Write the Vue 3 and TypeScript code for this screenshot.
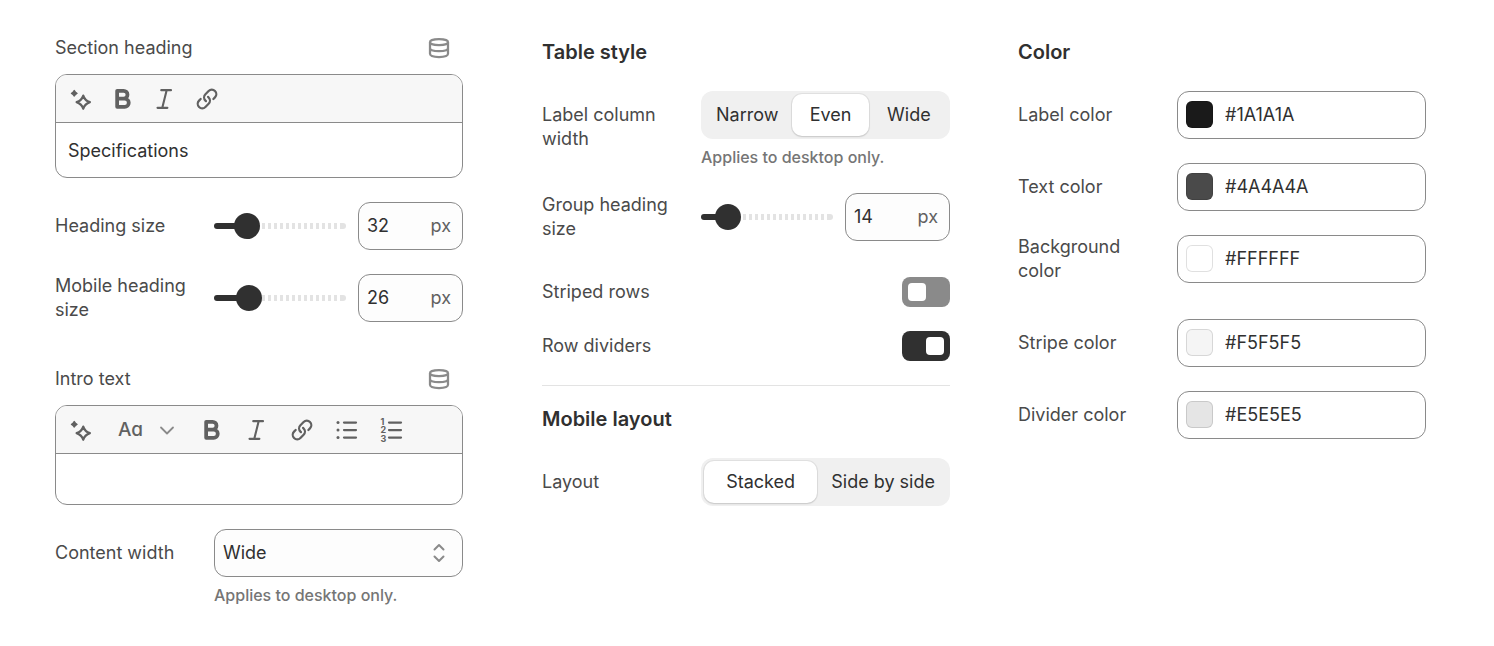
<script setup lang="ts">
import { reactive, ref } from 'vue'

interface SizeSetting {
  id: string
  label: string
  value: number
  min: number
  max: number
  wraps: boolean
}

interface ColorSetting {
  id: string
  label: string
  value: string
  wraps: boolean
}

const heading = ref('Specifications')
const intro = ref('')
const contentWidth = ref('Wide')

const headingSizes = reactive<SizeSetting[]>([
  { id: 'heading-size', label: 'Heading size', value: 32, min: 16, max: 100, wraps: false },
  { id: 'mobile-heading-size', label: 'Mobile heading size', value: 26, min: 12, max: 80, wraps: true },
])

const groupSizes = reactive<SizeSetting[]>([
  { id: 'group-heading-size', label: 'Group heading size', value: 14, min: 10, max: 40, wraps: true },
])

const columnWidths = ['Narrow', 'Even', 'Wide']
const columnWidth = ref('Even')
const layouts = ['Stacked', 'Side by side']
const layout = ref('Stacked')

const toggles = reactive([
  { id: 'striped-rows', label: 'Striped rows', on: false },
  { id: 'row-dividers', label: 'Row dividers', on: true },
])

const colors = reactive<ColorSetting[]>([
  { id: 'label-color', label: 'Label color', value: '#1A1A1A', wraps: false },
  { id: 'text-color', label: 'Text color', value: '#4A4A4A', wraps: false },
  { id: 'background-color', label: 'Background color', value: '#FFFFFF', wraps: true },
  { id: 'stripe-color', label: 'Stripe color', value: '#F5F5F5', wraps: false },
  { id: 'divider-color', label: 'Divider color', value: '#E5E5E5', wraps: false },
])

function fill(s: SizeSetting): string {
  return `${((s.value - s.min) / (s.max - s.min)) * 100}%`
}
</script>

<template>
  <svg class="symbols" aria-hidden="true">
    <symbol id="i-magic" viewBox="0 0 20 20">
      <path d="M11.5 7.7q1.1 3.3 4.4 4.4q-3.3 1.1-4.4 4.4q-1.1-3.3-4.4-4.4q3.3-1.1 4.4-4.4z" fill="none" stroke="currentColor" stroke-width="1.5" stroke-linejoin="round" />
      <path d="M5.5 4.4q.6 1.2 1.8 1.8q-1.2.6-1.8 1.8q-.6-1.2-1.8-1.8q1.2-.6 1.8-1.8z" fill="currentColor" stroke="currentColor" stroke-width="1" stroke-linejoin="round" />
    </symbol>
    <symbol id="i-bold" viewBox="0 0 20 20">
      <path d="M6.1 4.5h4.3a2.6 2.6 0 0 1 0 5.2H6.1zM6.1 9.7h5a2.75 2.75 0 0 1 0 5.5h-5z" fill="none" stroke="currentColor" stroke-width="2.5" stroke-linejoin="round" />
    </symbol>
    <symbol id="i-italic" viewBox="0 0 20 20">
      <path d="M7.5 4.1h6.5M5 15.9h6.6M11.1 4.1L8.2 15.9" fill="none" stroke="currentColor" stroke-width="1.4" stroke-linecap="round" />
    </symbol>
    <symbol id="i-link" viewBox="0 0 20 20">
      <path d="M15.842 4.175a3.746 3.746 0 0 0-5.298 0l-2.116 2.117a3.75 3.75 0 0 0 .01 5.313l.338.336a.75.75 0 1 0 1.057-1.064l-.339-.337a2.25 2.25 0 0 1-.005-3.187l2.116-2.117a2.246 2.246 0 1 1 3.173 3.18l-1.052 1.047a.75.75 0 0 0 1.058 1.064l1.052-1.047a3.746 3.746 0 0 0 .006-5.305z" fill="currentColor" />
      <path d="M4.178 15.845a3.75 3.75 0 0 0 5.304 0l2.121-2.122a3.75 3.75 0 0 0 0-5.303l-.362-.362a.75.75 0 0 0-1.06 1.06l.362.362a2.25 2.25 0 0 1 0 3.182l-2.122 2.122a2.25 2.25 0 1 1-3.182-3.182l1.07-1.07a.75.75 0 1 0-1.062-1.06l-1.069 1.069a3.75 3.75 0 0 0 0 5.304z" fill="currentColor" />
    </symbol>
    <symbol id="i-data" viewBox="0 0 20 20">
      <g fill="none" stroke="currentColor" stroke-width="1.5">
        <ellipse cx="10" cy="6.1" rx="6" ry="2" />
        <path d="M4 6.1v7.8c0 1.3 2.4 2.1 6 2.1s6-.8 6-2.1V6.1M4 10c0 1.3 2.4 2.1 6 2.1s6-.8 6-2.1" />
      </g>
    </symbol>
  </svg>

  <main class="panel">
    <section class="column column--first">
      <div class="field">
        <div class="field-head">
          <label for="section-heading">Section heading</label>
          <button type="button" class="icon-button icon-button--muted" aria-label="Connect dynamic source">
            <svg class="icon"><use href="#i-data" /></svg>
          </button>
        </div>
        <div class="editor">
          <div class="toolbar">
            <button type="button" class="icon-button" aria-label="Generate text"><svg class="icon"><use href="#i-magic" /></svg></button>
            <button type="button" class="icon-button" aria-label="Bold"><svg class="icon"><use href="#i-bold" /></svg></button>
            <button type="button" class="icon-button" aria-label="Italic"><svg class="icon"><use href="#i-italic" /></svg></button>
            <button type="button" class="icon-button" aria-label="Link"><svg class="icon"><use href="#i-link" /></svg></button>
          </div>
          <input id="section-heading" v-model="heading" class="editor-line" type="text" />
        </div>
      </div>

      <div v-for="s in headingSizes" :key="s.id" class="row" :class="{ 'row--wraps': s.wraps }">
        <label class="row-label" :for="s.id">{{ s.label }}</label>
        <div class="size">
          <input v-model.number="s.value" class="slider" type="range" :min="s.min" :max="s.max" :aria-label="s.label" :style="{ '--fill': fill(s) }" />
          <div class="box number">
            <input :id="s.id" v-model.number="s.value" type="number" />
            <span class="unit">px</span>
          </div>
        </div>
      </div>

      <div class="field field--spaced">
        <div class="field-head">
          <label for="intro-text">Intro text</label>
          <button type="button" class="icon-button icon-button--muted" aria-label="Connect dynamic source">
            <svg class="icon"><use href="#i-data" /></svg>
          </button>
        </div>
        <div class="editor">
          <div class="toolbar toolbar--wide">
            <button type="button" class="icon-button" aria-label="Generate text"><svg class="icon"><use href="#i-magic" /></svg></button>
            <button type="button" class="format-button" aria-label="Formatting">
              <span class="format-glyph">Aa</span>
              <svg class="chevron" viewBox="0 0 16 16"><path d="M2 5.5l6 6 6-6" fill="none" stroke="currentColor" stroke-width="1.8" stroke-linecap="round" stroke-linejoin="round" /></svg>
            </button>
            <button type="button" class="icon-button" aria-label="Bold"><svg class="icon"><use href="#i-bold" /></svg></button>
            <button type="button" class="icon-button" aria-label="Italic"><svg class="icon"><use href="#i-italic" /></svg></button>
            <button type="button" class="icon-button" aria-label="Link"><svg class="icon"><use href="#i-link" /></svg></button>
            <button type="button" class="icon-button" aria-label="Bulleted list">
              <svg class="icon" viewBox="0 0 20 20">
                <path d="M8 5h8M8 10h8M8 15h8" stroke="currentColor" stroke-width="1.5" stroke-linecap="round" />
                <g fill="currentColor"><circle cx="4" cy="5" r="1" /><circle cx="4" cy="10" r="1" /><circle cx="4" cy="15" r="1" /></g>
              </svg>
            </button>
            <button type="button" class="icon-button" aria-label="Numbered list">
              <svg class="icon numerals" viewBox="0 0 20 20">
                <path d="M8 5h8M8 10h8M8 15h8" stroke="currentColor" stroke-width="1.5" stroke-linecap="round" />
                <text x="2.4" y="6.5">1</text><text x="2.4" y="12.1">2</text><text x="2.4" y="17.7">3</text>
              </svg>
            </button>
          </div>
          <textarea id="intro-text" v-model="intro" class="editor-area" rows="1"></textarea>
        </div>
      </div>

      <div class="row">
        <label class="row-label" for="content-width">Content width</label>
        <div class="select">
          <select id="content-width" v-model="contentWidth" class="box">
            <option>Narrow</option>
            <option>Wide</option>
          </select>
          <svg class="select-arrows" viewBox="0 0 20 20"><path d="M5.5 6.5L10 2l4.5 4.5M5.5 13.5L10 18l4.5-4.5" fill="none" stroke="currentColor" stroke-width="2" stroke-linecap="round" stroke-linejoin="round" /></svg>
        </div>
        <p class="help">Applies to desktop only.</p>
      </div>
    </section>

    <section class="column column--titled">
      <h2>Table style</h2>
      <div class="stack">
        <div class="row row--top">
          <span id="column-width" class="row-label">Label column width</span>
          <div class="segments" role="group" aria-labelledby="column-width">
            <button v-for="w in columnWidths" :key="w" type="button" :aria-pressed="w === columnWidth" @click="columnWidth = w">{{ w }}</button>
          </div>
          <p class="help">Applies to desktop only.</p>
        </div>

        <div v-for="s in groupSizes" :key="s.id" class="row" :class="{ 'row--wraps': s.wraps }">
          <label class="row-label" :for="s.id">{{ s.label }}</label>
          <div class="size">
            <input v-model.number="s.value" class="slider" type="range" :min="s.min" :max="s.max" :aria-label="s.label" :style="{ '--fill': fill(s) }" />
            <div class="box number">
              <input :id="s.id" v-model.number="s.value" type="number" />
              <span class="unit">px</span>
            </div>
          </div>
        </div>

        <div v-for="t in toggles" :key="t.id" class="toggle-row">
          <label :for="t.id">{{ t.label }}</label>
          <input :id="t.id" v-model="t.on" class="toggle" type="checkbox" role="switch" />
        </div>
      </div>

      <hr />

      <h2>Mobile layout</h2>
      <div class="row">
        <span id="mobile-layout" class="row-label">Layout</span>
        <div class="segments" role="group" aria-labelledby="mobile-layout">
          <button v-for="l in layouts" :key="l" type="button" :aria-pressed="l === layout" @click="layout = l">{{ l }}</button>
        </div>
      </div>
    </section>

    <section class="column column--titled">
      <h2>Color</h2>
      <div class="stack">
        <div v-for="c in colors" :key="c.id" class="row" :class="{ 'row--wraps': c.wraps }">
          <label class="row-label" :for="c.id">{{ c.label }}</label>
          <div class="box color">
            <button type="button" class="swatch" :aria-label="`Pick ${c.label.toLowerCase()}`" :style="{ backgroundColor: c.value }"></button>
            <input :id="c.id" v-model="c.value" type="text" />
          </div>
        </div>
      </div>
    </section>
  </main>
</template>

<style>
body {
  margin: 0;
  background: #fff;
}
</style>

<style scoped>
.symbols {
  display: none;
}

.panel {
  display: flex;
  align-items: flex-start;
  gap: 68px;
  padding: 33px 68px 39px 55px;
  color: #4a4a4a;
  font: 425 18px/24px Inter, "Liberation Sans", sans-serif;
}

.panel button,
.panel input,
.panel select,
.panel textarea {
  margin: 0;
  padding: 0;
  border: 0;
  border-radius: 0;
  background: none;
  color: #303030;
  font: inherit;
  min-width: 0;
  box-sizing: border-box;
}

.column {
  flex: 1 1 0;
  min-width: 0;
}

.column--first {
  display: flex;
  flex-direction: column;
  gap: 24px;
  margin-right: 11px;
}

.column--titled {
  padding-top: 7px;
}

.stack {
  display: flex;
  flex-direction: column;
  gap: 24px;
}

h2 {
  margin: 0 0 27px;
  color: #303030;
  font-size: 20px;
  font-weight: 600;
  line-height: 24px;
}

hr {
  height: 1px;
  margin: 24px 0 21px;
  border: 0;
  background: #e3e3e3;
}

/* Labelled rows */
.row {
  display: grid;
  grid-template-columns: 147px minmax(0, 1fr);
  column-gap: 12px;
  align-items: center;
}

.row--wraps {
  padding-bottom: 12px;
}

.row--top {
  align-items: start;
}

.row--top .row-label {
  grid-row: 1 / span 2;
  padding-top: 12px;
}

.row-label {
  padding-right: 12px;
}

.help {
  grid-column: 2;
  margin: 6px 0 0;
  color: #757575;
  font-size: 16px;
  font-weight: 450;
}

/* Rich text fields */
.field--spaced {
  margin-top: 6px;
}

.field-head {
  display: flex;
  align-items: center;
  justify-content: space-between;
  margin-bottom: 11px;
  padding-right: 9px;
}

.editor {
  display: flex;
  flex-direction: column;
  overflow: hidden;
  border: 1px solid #8a8a8a;
  border-radius: 12px;
}

.toolbar {
  display: flex;
  align-items: center;
  gap: 12px;
  padding: 9px 10px 8px;
  border-bottom: 1px solid #8a8a8a;
  background: #f7f7f7;
}

.toolbar--wide {
  gap: 15px;
}

.panel .icon-button {
  display: flex;
  flex: none;
  color: #616161;
}

.panel .icon-button--muted {
  color: #8a8a8a;
}

.icon {
  width: 30px;
  height: 30px;
}

.numerals text {
  fill: currentColor;
  font-size: 6px;
  font-weight: 700;
}

.panel .format-button {
  display: flex;
  flex: none;
  align-items: center;
  justify-content: space-between;
  width: 71px;
  padding: 0 7px;
  color: #616161;
}

.format-glyph {
  font-size: 19px;
  font-weight: 500;
  font-feature-settings: "cv11";
}

.chevron {
  width: 16px;
  height: 16px;
  color: #8a8a8a;
}

.panel .editor-line {
  height: 54px;
  padding: 0 12px;
}

.panel .editor-area {
  display: block;
  height: 50px;
  padding: 12px;
  resize: none;
}

/* Boxed inputs */
.panel .box {
  box-sizing: border-box;
  height: 48px;
  border: 1px solid #8a8a8a;
  border-radius: 12px;
  background: #fdfdfd;
}

.size {
  display: flex;
  align-items: center;
  gap: 12px;
}

.number {
  display: flex;
  flex: none;
  align-items: center;
  width: 105px;
  padding: 0 11px 0 8px;
}

.number input {
  flex: 1;
  appearance: textfield;
}

.number input::-webkit-inner-spin-button {
  display: none;
}

.unit {
  color: #616161;
}

.slider {
  flex: 1;
  height: 26px;
  appearance: none;
}

.slider::-webkit-slider-runnable-track {
  height: 6px;
  border-radius: 3px;
  background:
    linear-gradient(#303030, #303030) 0 0 / var(--fill) 100% no-repeat,
    linear-gradient(#e3e3e3, #e3e3e3) 100% 0 / 6px 100% no-repeat,
    repeating-linear-gradient(90deg, #e3e3e3 0 3px, transparent 3px 6px);
}

.slider::-webkit-slider-thumb {
  width: 26px;
  height: 26px;
  margin-top: -10px;
  border-radius: 50%;
  background: #303030;
  appearance: none;
}

.select {
  display: grid;
  grid-template-columns: minmax(0, 1fr) 48px;
  align-items: center;
}

.panel .select select {
  grid-area: 1 / 1 / 2 / 3;
  padding-left: 8px;
  appearance: none;
}

.select-arrows {
  grid-area: 1 / 2;
  justify-self: center;
  width: 20px;
  height: 20px;
  color: #8a8a8a;
  pointer-events: none;
}

/* Segmented controls */
.segments {
  display: flex;
  gap: 2px;
  box-sizing: border-box;
  height: 48px;
  padding: 3px;
  border-radius: 12px;
  background: #f0f0f0;
}

.panel .segments button {
  flex: 1 1 0;
  min-width: min-content;
  padding: 0 12px;
  border-radius: 10px;
  white-space: nowrap;
}

.panel .segments button[aria-pressed="true"] {
  background: #fff;
  box-shadow: 0 0 0 1px rgba(0, 0, 0, 0.06), 0 1px 2px rgba(0, 0, 0, 0.12);
}

/* Switches */
.toggle-row {
  display: flex;
  align-items: center;
  justify-content: space-between;
}

.panel .toggle {
  display: flex;
  width: 48px;
  height: 30px;
  padding: 6px;
  border-radius: 8px;
  background: #8a8a8a;
  appearance: none;
}

.toggle::before {
  width: 18px;
  height: 18px;
  border-radius: 4px;
  background: #fff;
  content: "";
}

.panel .toggle:checked {
  justify-content: flex-end;
  background: #303030;
}

/* Color pickers */
.color {
  display: flex;
  align-items: center;
  gap: 12px;
  padding: 0 8px 1px;
}

.panel .color {
  background: #fff;
}

.color input {
  flex: 1;
}

.panel .swatch {
  flex: none;
  width: 27px;
  height: 27px;
  border-radius: 6px;
  box-shadow: inset 0 0 0 1px rgba(0, 0, 0, 0.12);
}
</style>
